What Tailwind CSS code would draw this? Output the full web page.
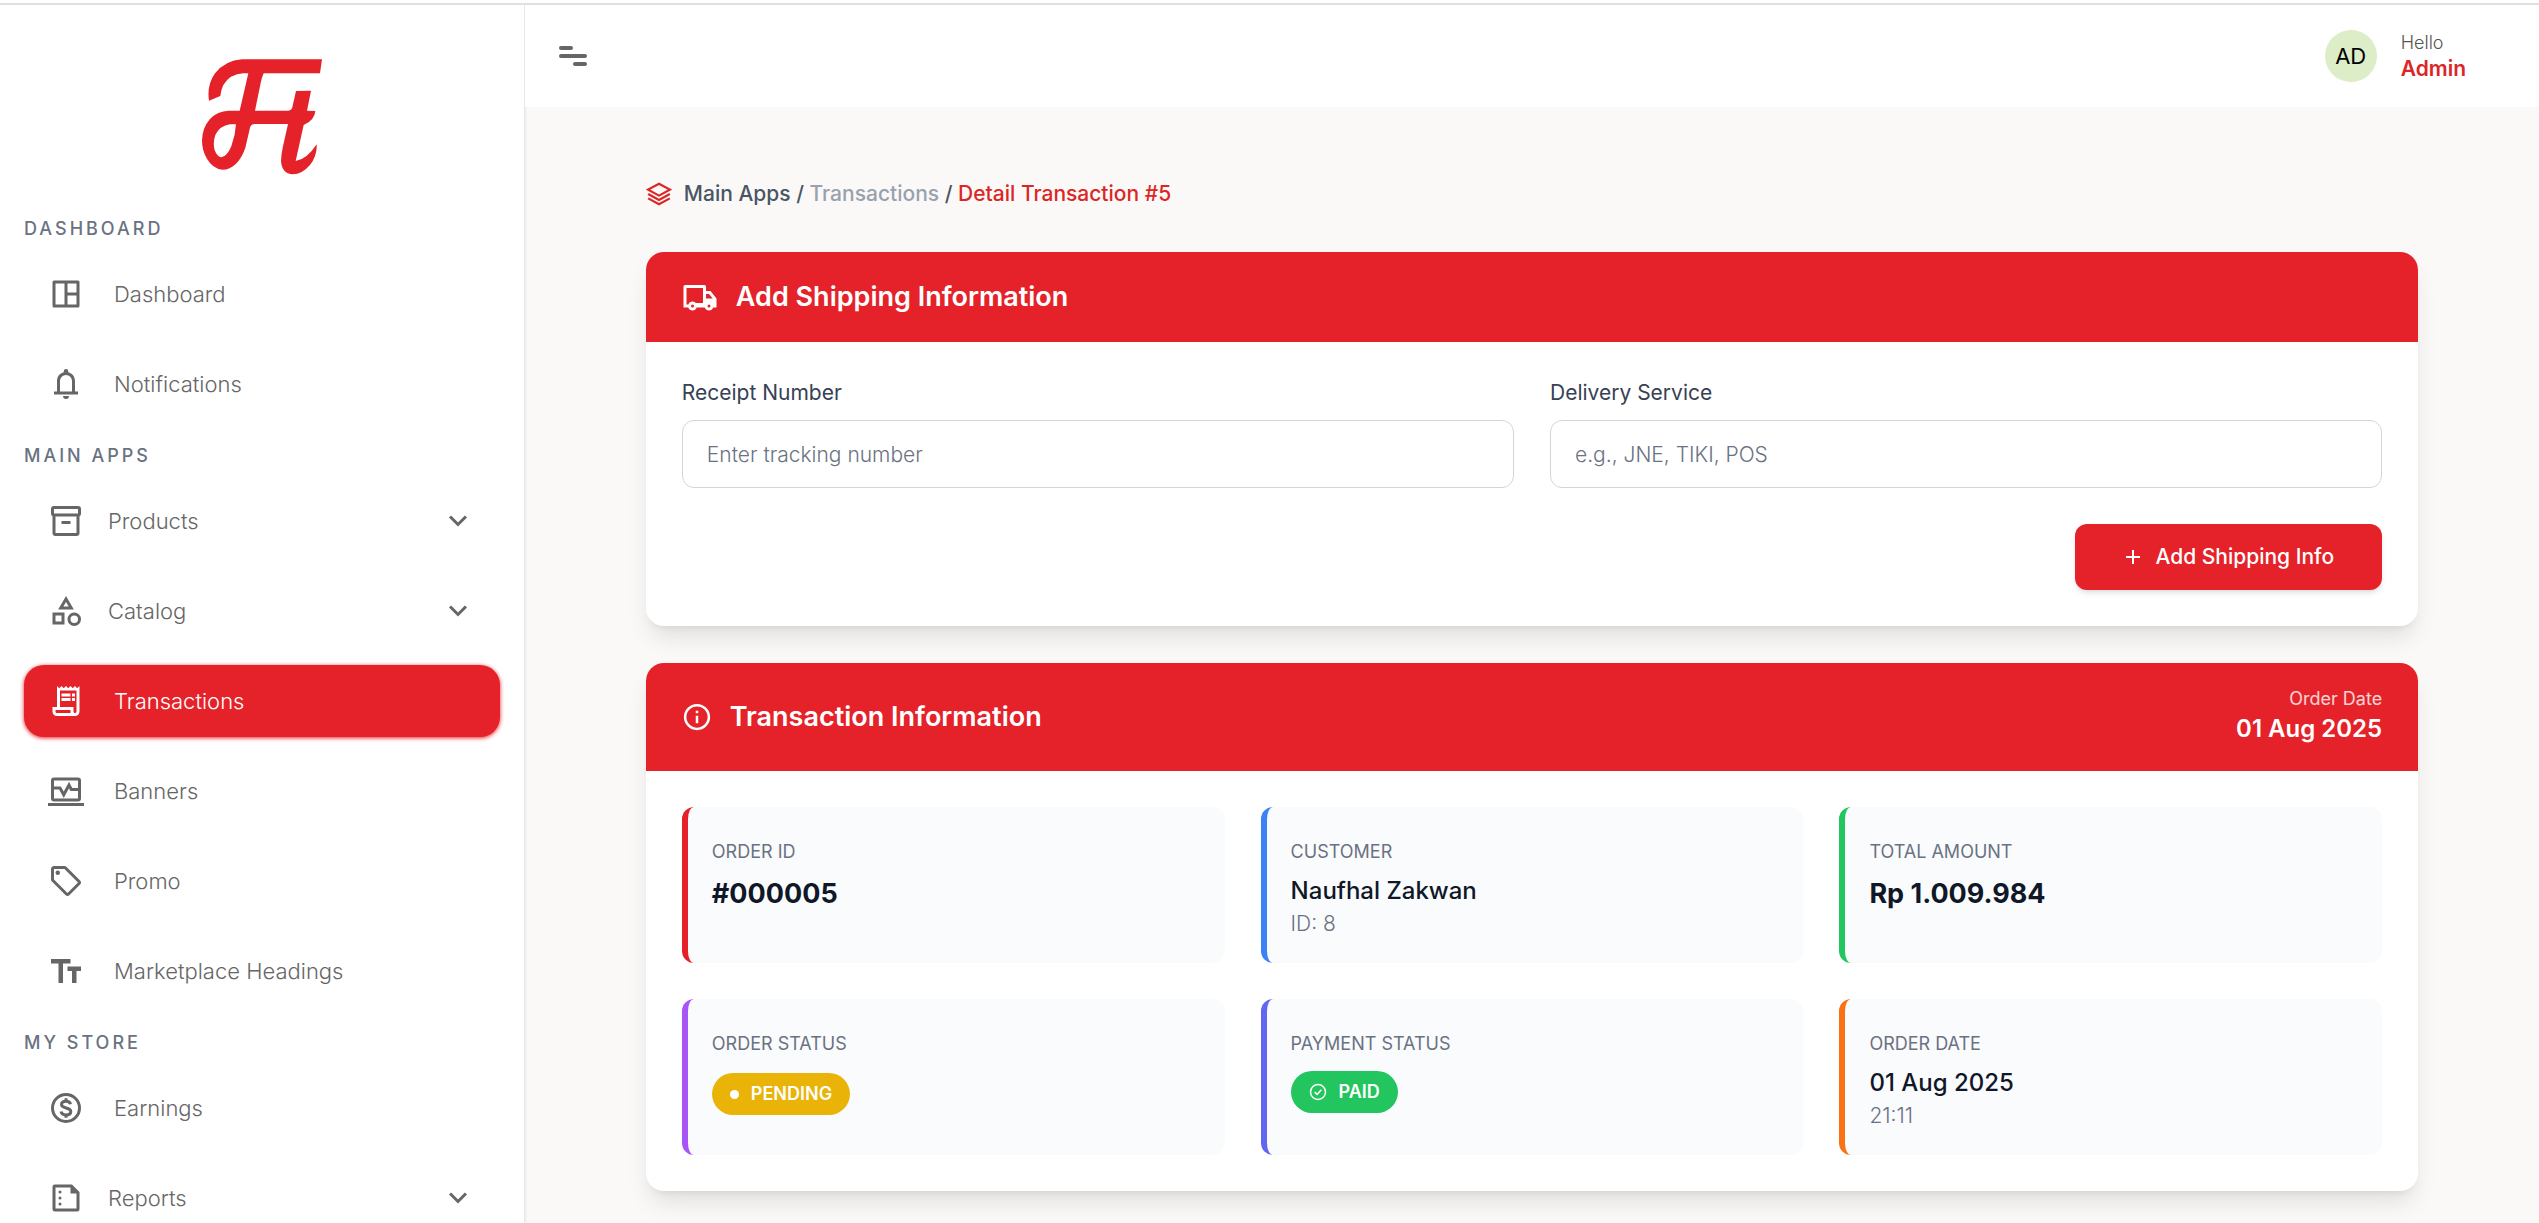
<!DOCTYPE html>
<html lang="en">
<head>
  <meta charset="UTF-8" />
  <meta name="viewport" content="width=device-width, initial-scale=1.0" />
  <title>Detail Transaction #5</title>
  <script src="https://cdn.jsdelivr.net/npm/@tailwindcss/browser@4"></script>
</head>
<body class="bg-[#faf9f7] font-['Inter',sans-serif] text-[21px] leading-[30px] text-gray-900">
  <div class="h-[5px] border-b-2 border-[#e0e0e0] bg-white"></div>
  <div class="flex h-[calc(100vh-5px)] overflow-hidden">

    <!-- Sidebar -->
    <aside class="w-[525px] shrink-0 overflow-hidden border-r border-gray-200 bg-white px-6 text-[22px] font-light text-[#666] shadow">
      <a href="#" class="mt-[54px] flex justify-center" aria-label="Home">
        <svg class="h-[116px] w-[122px]" viewBox="63 56 366 348" fill="#e52229">
          <path fill-rule="evenodd" d="M426 57 L420 99 L251 99 Q246 110 242 128 L225 211 L325 211 Q334 211 337 201 L348 152 L393 151 L381 211 L406 212 Q404 240 371 254 L347 362 Q380 358 410 312 Q412 345 390 374 Q366 402 338 402 Q306 400 303 362 Q304 340 309 318 L324 251 L224 251 Q213 251 210 262 L196 322 Q186 352 168 370 Q150 388 127 388 Q98 386 80 354 Q66 330 66 300 Q67 262 90 236 Q112 212 146 211 L179 211 L205 99 L190 99 Q150 101 130 134 Q122 150 121 167 L87 181 Q80 135 104 100 Q136 60 186 57 Z M168 252 L150 252 Q120 256 106 284 Q98 306 104 330 Q112 350 124 351 Q140 350 154 318 Q166 286 168 252 Z"/>
        </svg>
      </a>

      <nav class="mt-9">
        <h3 class="mb-[11px] text-[18px] leading-9 font-medium tracking-[3px] text-gray-500">DASHBOARD</h3>
        <ul class="flex flex-col gap-[18px]">
          <li><a href="#" class="flex h-[72px] items-center gap-[30px] rounded-[20px] px-6">
            <svg class="size-9" viewBox="0 0 24 24" fill="currentColor"><path fill-rule="evenodd" d="M4 3h16a1 1 0 0 1 1 1v16a1 1 0 0 1-1 1H4a1 1 0 0 1-1-1V4a1 1 0 0 1 1-1zm1 2v14h6V5H5zm8 0v6h6V5h-6zm0 8v6h6v-6h-6z"/></svg>
            Dashboard</a></li>
          <li><a href="#" class="flex h-[72px] items-center gap-[30px] rounded-[20px] px-6">
            <svg class="size-9" viewBox="0 0 24 24" fill="currentColor"><path d="M4 19v-2h2v-7c0-2.800 1.800-5.200 4.500-5.800V3.500a1.500 1.500 0 0 1 3 0v.7C16.200 4.800 18 7.200 18 10v7h2v2H4zm8 3a2 2 0 0 1-2-2h4a2 2 0 0 1-2 2zm-4-5h8v-7a4 4 0 0 0-8 0v7z"/></svg>
            Notifications</a></li>
        </ul>

        <h3 class="mt-[18px] mb-[11px] text-[18px] leading-9 font-medium tracking-[3px] text-gray-500">MAIN APPS</h3>
        <ul class="flex flex-col gap-[18px]">
          <li><button class="flex h-[72px] w-full items-center gap-6 rounded-[20px] px-6">
            <svg class="size-9" viewBox="0 0 24 24" fill="none" stroke="currentColor" stroke-width="2"><rect x="3" y="3" width="18" height="5" rx="1"/><path d="M4 8v12a1 1 0 0 0 1 1h14a1 1 0 0 0 1-1V8M9 13h6"/></svg>
            Products
            <svg class="ml-auto size-9" viewBox="0 0 24 24" fill="none" stroke="currentColor" stroke-width="2"><path d="m6.700 9 5.300 5.300L17.300 9"/></svg></button></li>
          <li><button class="flex h-[72px] w-full items-center gap-6 rounded-[20px] px-6">
            <svg class="size-9" viewBox="0 0 24 24" fill="none" stroke="currentColor" stroke-width="2"><path d="m12 4-3.500 6h7zM4 14h6v6H4z"/><circle cx="17.500" cy="17.500" r="3.500"/></svg>
            Catalog
            <svg class="ml-auto size-9" viewBox="0 0 24 24" fill="none" stroke="currentColor" stroke-width="2"><path d="m6.700 9 5.300 5.300L17.300 9"/></svg></button></li>
          <li><a href="#" class="flex h-[72px] items-center gap-[30px] rounded-[20px] bg-[#e52229] px-6 text-white shadow-[0_1px_4px_#e52229]">
            <svg class="size-9" viewBox="0 0 24 24" fill="currentColor"><path d="M19.500 3.500 18 2l-1.500 1.500L15 2l-1.500 1.500L12 2l-1.500 1.500L9 2 7.500 3.500 6 2v14H3v3c0 1.700 1.300 3 3 3h12c1.700 0 3-1.300 3-3V2l-1.500 1.500zM15 20H6c-.6 0-1-.4-1-1v-1h10v2zm4-1c0 .6-.4 1-1 1s-1-.4-1-1v-3H8V5h11v14zM9 7h6v2H9zm7 0h2v2h-2zm-7 3h6v2H9zm7 0h2v2h-2z"/></svg>
            Transactions</a></li>
          <li><a href="#" class="flex h-[72px] items-center gap-[30px] rounded-[20px] px-6">
            <svg class="size-9" viewBox="0 0 24 24" fill="none" stroke="currentColor" stroke-width="2"><rect x="3" y="4" width="18" height="14" rx="1"/><path d="M0 21h24M4 10h4l2.500 4.500L14 8l1.500 3H20"/></svg>
            Banners</a></li>
          <li><a href="#" class="flex h-[72px] items-center gap-[30px] rounded-[20px] px-6">
            <svg class="size-9" viewBox="0 0 24 24" fill="currentColor"><path d="m21.400 11.600-9-9C12 2.200 11.500 2 11 2H4c-1.100 0-2 .9-2 2v7c0 .6.2 1.100.6 1.400l9 9c.4.400.9.600 1.400.600.600 0 1.100-.2 1.400-.6l7-7c.4-.3.600-.8.600-1.400 0-.5-.2-1-.6-1.400zM13 20 4 11V4h7l9 9-7 7z"/><circle cx="6.500" cy="6.500" r="1.500"/></svg>
            Promo</a></li>
          <li><a href="#" class="flex h-[72px] items-center gap-[30px] rounded-[20px] px-6">
            <svg class="size-9" viewBox="0 0 24 24" fill="currentColor"><path d="M2 4h13v3h-5v13H7V7H2zM13 9h9v3h-3v8h-3v-8h-3z"/></svg>
            Marketplace Headings</a></li>
        </ul>

        <h3 class="mt-[18px] mb-[11px] text-[18px] leading-9 font-medium tracking-[3px] text-gray-500">MY STORE</h3>
        <ul class="flex flex-col gap-[18px]">
          <li><a href="#" class="flex h-[72px] items-center gap-[30px] rounded-[20px] px-6">
            <svg class="size-9" viewBox="0 0 24 24" fill="none" stroke="currentColor" stroke-width="2"><circle cx="12" cy="12" r="9"/><path d="M15 9.500C14.700 8 13.600 7.500 12 7.500c-1.800 0-3 .8-3 2.200 0 3.200 6.200 1.400 6.200 4.600 0 1.500-1.300 2.300-3.200 2.300-1.800 0-3-.8-3.300-2.300M12 5.500v2M12 16.500v2"/></svg>
            Earnings</a></li>
          <li><button class="flex h-[72px] w-full items-center gap-6 rounded-[20px] px-6">
            <svg class="size-9" viewBox="0 0 24 24" fill="currentColor"><path fill-rule="evenodd" d="M4.500 3H16l5 5v11.500a1.500 1.500 0 0 1-1.500 1.500h-15A1.500 1.500 0 0 1 3 19.500v-15A1.500 1.500 0 0 1 4.500 3zM5 5v14h14V9h-4V5z"/><circle cx="8" cy="8" r="1"/><circle cx="8" cy="12" r="1"/><circle cx="8" cy="16" r="1"/></svg>
            Reports
            <svg class="ml-auto size-9" viewBox="0 0 24 24" fill="none" stroke="currentColor" stroke-width="2"><path d="m6.700 9 5.300 5.300L17.300 9"/></svg></button></li>
        </ul>
      </nav>
    </aside>

    <div class="min-w-0 flex-1">
      <!-- Topbar -->
      <header class="flex h-[102px] items-center justify-between bg-white pr-[73px] pl-[34px]">
        <button aria-label="Toggle menu" class="text-[#666]">
          <svg class="h-5 w-7" viewBox="0 0 28 20" fill="currentColor"><rect width="14" height="4" rx="2"/><rect y="8" width="28" height="4" rx="2"/><rect x="14" y="16" width="14" height="4" rx="2"/></svg>
        </button>
        <div class="flex items-center gap-6">
          <span class="flex size-[52px] items-center justify-center rounded-full bg-[#dcedc8] text-[22px] text-black">AD</span>
          <div>
            <p class="text-[18px] leading-[26px] font-light text-[#555]">Hello</p>
            <p class="leading-[26px] font-semibold text-[#dc2626]">Admin</p>
          </div>
        </div>
      </header>

      <main class="px-[6%] pt-[72px]">
        <nav class="flex items-center gap-3 font-medium text-gray-600" aria-label="Breadcrumb">
          <svg class="size-[26px] text-[#dc2626]" viewBox="0 0 24 24" fill="none" stroke="currentColor" stroke-width="2"><path d="m12 2.500 10 5.500-10 5.500L2 8zM2 12l10 5.500L22 12M2 16l10 5.500L22 16"/></svg>
          <p>Main Apps / <a href="#" class="text-gray-400">Transactions</a> / <a href="#" class="text-[#dc2626]">Detail Transaction #5</a></p>
        </nav>

        <!-- Shipping form -->
        <section class="mt-[43px] overflow-hidden rounded-[18px] bg-white shadow-[0_15px_23px_-4px_rgb(0_0_0/0.1),0_6px_9px_-6px_rgb(0_0_0/0.1)]">
          <div class="flex items-center gap-[18px] bg-[#e52229] px-9 py-6 text-white">
            <svg class="size-9" viewBox="0 0 24 24" fill="currentColor"><path fill-rule="evenodd" d="M2 4h13a1 1 0 0 1 1 1v3h3l4 5v6h-2.200a3 3 0 0 1-5.600 0H9.800a3 3 0 0 1-5.600 0H1V5a1 1 0 0 1 1-1zm1 2v11h1.200a3 3 0 0 1 5.100-1H14V6H3zm13 4v3h4.500L18 10h-2zM7 17a1 1 0 1 0 0 2 1 1 0 0 0 0-2zm11 0a1 1 0 1 0 0 2 1 1 0 0 0 0-2z"/></svg>
            <h2 class="text-[27px] leading-[42px] font-semibold">Add Shipping Information</h2>
          </div>
          <form class="p-9">
            <div class="grid grid-cols-2 gap-9">
              <div>
                <label for="receipt" class="mb-3 block text-gray-700">Receipt Number</label>
                <input id="receipt" type="text" placeholder="Enter tracking number" class="block h-[68px] w-full rounded-xl border border-gray-300 px-6 font-light placeholder:text-gray-500" />
              </div>
              <div>
                <label for="service" class="mb-3 block text-gray-700">Delivery Service</label>
                <input id="service" type="text" placeholder="e.g., JNE, TIKI, POS" class="block h-[68px] w-full rounded-xl border border-gray-300 px-6 font-light placeholder:text-gray-500" />
              </div>
            </div>
            <div class="mt-9 flex justify-end">
              <button type="button" class="flex h-[66px] items-center gap-3 rounded-xl bg-[#e52229] px-12 font-medium text-white shadow-md">
                <svg class="size-5" viewBox="0 0 20 20" stroke="currentColor" stroke-width="2"><path d="M10 3v14M3 10h14"/></svg>
                Add Shipping Info
              </button>
            </div>
          </form>
        </section>

        <!-- Transaction details -->
        <section class="mt-[37px] overflow-hidden rounded-[18px] bg-white shadow-[0_15px_23px_-4px_rgb(0_0_0/0.1),0_6px_9px_-6px_rgb(0_0_0/0.1)]">
          <div class="flex items-center justify-between bg-[#e52229] px-9 py-6 text-white">
            <div class="flex items-center gap-[18px]">
              <svg class="size-[30px]" viewBox="0 0 24 24" fill="none" stroke="currentColor" stroke-width="2"><circle cx="12" cy="12" r="9.500"/><path d="M12 11v6M12 7v2"/></svg>
              <h2 class="text-[27px] leading-[42px] font-semibold">Transaction Information</h2>
            </div>
            <div class="text-right">
              <p class="text-[18px] leading-6 text-white/80">Order Date</p>
              <p class="text-[24px] leading-9 font-semibold">01 Aug 2025</p>
            </div>
          </div>
          <div class="grid grid-cols-3 gap-9 p-9">
            <div class="min-h-[156px] rounded-xl border-l-[6px] border-[#e52229] bg-[#fafbfd] px-6 pt-[30px] pb-6">
              <p class="mb-[6px] text-[18px] text-gray-500">ORDER ID</p>
              <p class="text-[27px] leading-[42px] font-bold">#000005</p>
            </div>
            <div class="min-h-[156px] rounded-xl border-l-[6px] border-[#3b82f6] bg-[#fafbfd] px-6 pt-[30px] pb-6">
              <p class="mb-[6px] text-[18px] text-gray-500">CUSTOMER</p>
              <p class="text-[24px] leading-9 font-medium">Naufhal Zakwan</p>
              <p class="font-light text-gray-500">ID: 8</p>
            </div>
            <div class="min-h-[156px] rounded-xl border-l-[6px] border-[#22c55e] bg-[#fafbfd] px-6 pt-[30px] pb-6">
              <p class="mb-[6px] text-[18px] text-gray-500">TOTAL AMOUNT</p>
              <p class="text-[27px] leading-[42px] font-bold">Rp 1.009.984</p>
            </div>
            <div class="min-h-[156px] rounded-xl border-l-[6px] border-[#a855f7] bg-[#fafbfd] px-6 pt-[30px] pb-6">
              <p class="mb-[14px] text-[18px] text-gray-500">ORDER STATUS</p>
              <span class="flex h-[42px] w-fit items-center gap-3 rounded-full bg-[#eab308] px-[18px] text-[18px] font-semibold text-white"><span class="size-[9px] rounded-full bg-white"></span>PENDING</span>
            </div>
            <div class="min-h-[156px] rounded-xl border-l-[6px] border-[#6366f1] bg-[#fafbfd] px-6 pt-[30px] pb-6">
              <p class="mb-3 text-[18px] text-gray-500">PAYMENT STATUS</p>
              <span class="flex h-[42px] w-fit items-center gap-3 rounded-full bg-[#22c55e] px-[18px] text-[18px] font-semibold text-white"><svg class="size-[18px]" viewBox="0 0 24 24" fill="none" stroke="currentColor" stroke-width="2"><circle cx="12" cy="12" r="10"/><path d="m7.500 12 3.200 3.200L16.500 9"/></svg>PAID</span>
            </div>
            <div class="min-h-[156px] rounded-xl border-l-[6px] border-[#f97316] bg-[#fafbfd] px-6 pt-[30px] pb-6">
              <p class="mb-[6px] text-[18px] text-gray-500">ORDER DATE</p>
              <p class="text-[24px] leading-9 font-medium">01 Aug 2025</p>
              <p class="font-light text-gray-500">21:11</p>
            </div>
          </div>
        </section>
      </main>
    </div>
  </div>
</body>
</html>
